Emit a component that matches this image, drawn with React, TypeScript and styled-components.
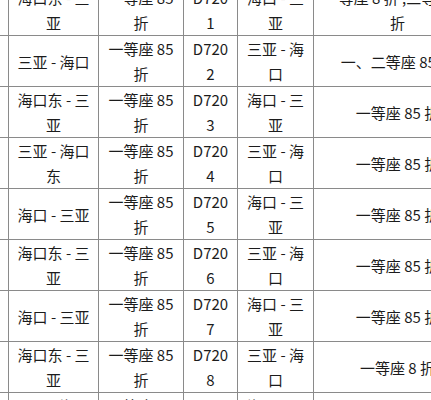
import React from "react";
import styled, { createGlobalStyle } from "styled-components";

const Global = createGlobalStyle`
  html, body { margin: 0; padding: 0; background: #ffffff; }
  body { overflow: hidden; width: 431px; height: 400px; }
`;

const Viewport = styled.div`
  width: 431px;
  height: 400px;
  overflow: hidden;
  background: #fff;
`;

const widths = [60, 90, 85, 54, 76, 168];
const total = widths.reduce((a, b) => a + b, 0);

const Table = styled.table`
  border-collapse: collapse;
  table-layout: fixed;
  width: ${total}px;
  margin-left: -52px;
  margin-top: -16px;
  font-family: "Noto Sans CJK SC", "Noto Sans", sans-serif;
  font-size: 15px;
  color: #1c1c1c;
`;

const Row = styled.tr`
  height: 51px;
`;

const Cell = styled.td<{ $w: number }>`
  width: ${(p) => p.$w}px;
  box-sizing: border-box;
  border: 1px solid #8a8a8a;
  padding: 0 2px;
  line-height: 25px;
  text-align: center;
  vertical-align: middle;
  white-space: pre;
  overflow: visible;
`;

type R = [string, string, string, string, string];

const rows: R[] = [
  ["海口东 - 三\n亚", "一等座 85\n折", "D720\n1", "海口 - 三\n亚", "一等座 8 折 ,二等座 85\n折"],
  ["三亚 - 海口", "一等座 85\n折", "D720\n2", "三亚 - 海\n口", "一、二等座 85 折"],
  ["海口东 - 三\n亚", "一等座 85\n折", "D720\n3", "海口 - 三\n亚", "一等座 85 折"],
  ["三亚 - 海口\n东", "一等座 85\n折", "D720\n4", "三亚 - 海\n口", "一等座 85 折"],
  ["海口 - 三亚", "一等座 85\n折", "D720\n5", "海口 - 三\n亚", "一等座 85 折"],
  ["海口东 - 三\n亚", "一等座 85\n折", "D720\n6", "三亚 - 海\n口", "一等座 85 折"],
  ["海口 - 三亚", "一等座 85\n折", "D720\n7", "海口 - 三\n亚", "一等座 85 折"],
  ["海口东 - 三\n亚", "一等座 85\n折", "D720\n8", "三亚 - 海\n口", "一等座 8 折"],
  ["三亚 - 海口\n东", "一等座 85\n折", "D720\n9", "海口 - 三\n亚", "一等座 85 折"],
];

export default function App() {
  return (
    <Viewport>
      <Global />
      <Table>
        <colgroup>
          {widths.map((w, i) => (
            <col key={i} style={{ width: w }} />
          ))}
        </colgroup>
        <tbody>
          {rows.map((r, i) => (
            <Row key={i}>
              <Cell $w={widths[0]}></Cell>
              {r.map((t, j) => (
                <Cell key={j} $w={widths[j + 1]}>
                  {t}
                </Cell>
              ))}
            </Row>
          ))}
        </tbody>
      </Table>
    </Viewport>
  );
}
